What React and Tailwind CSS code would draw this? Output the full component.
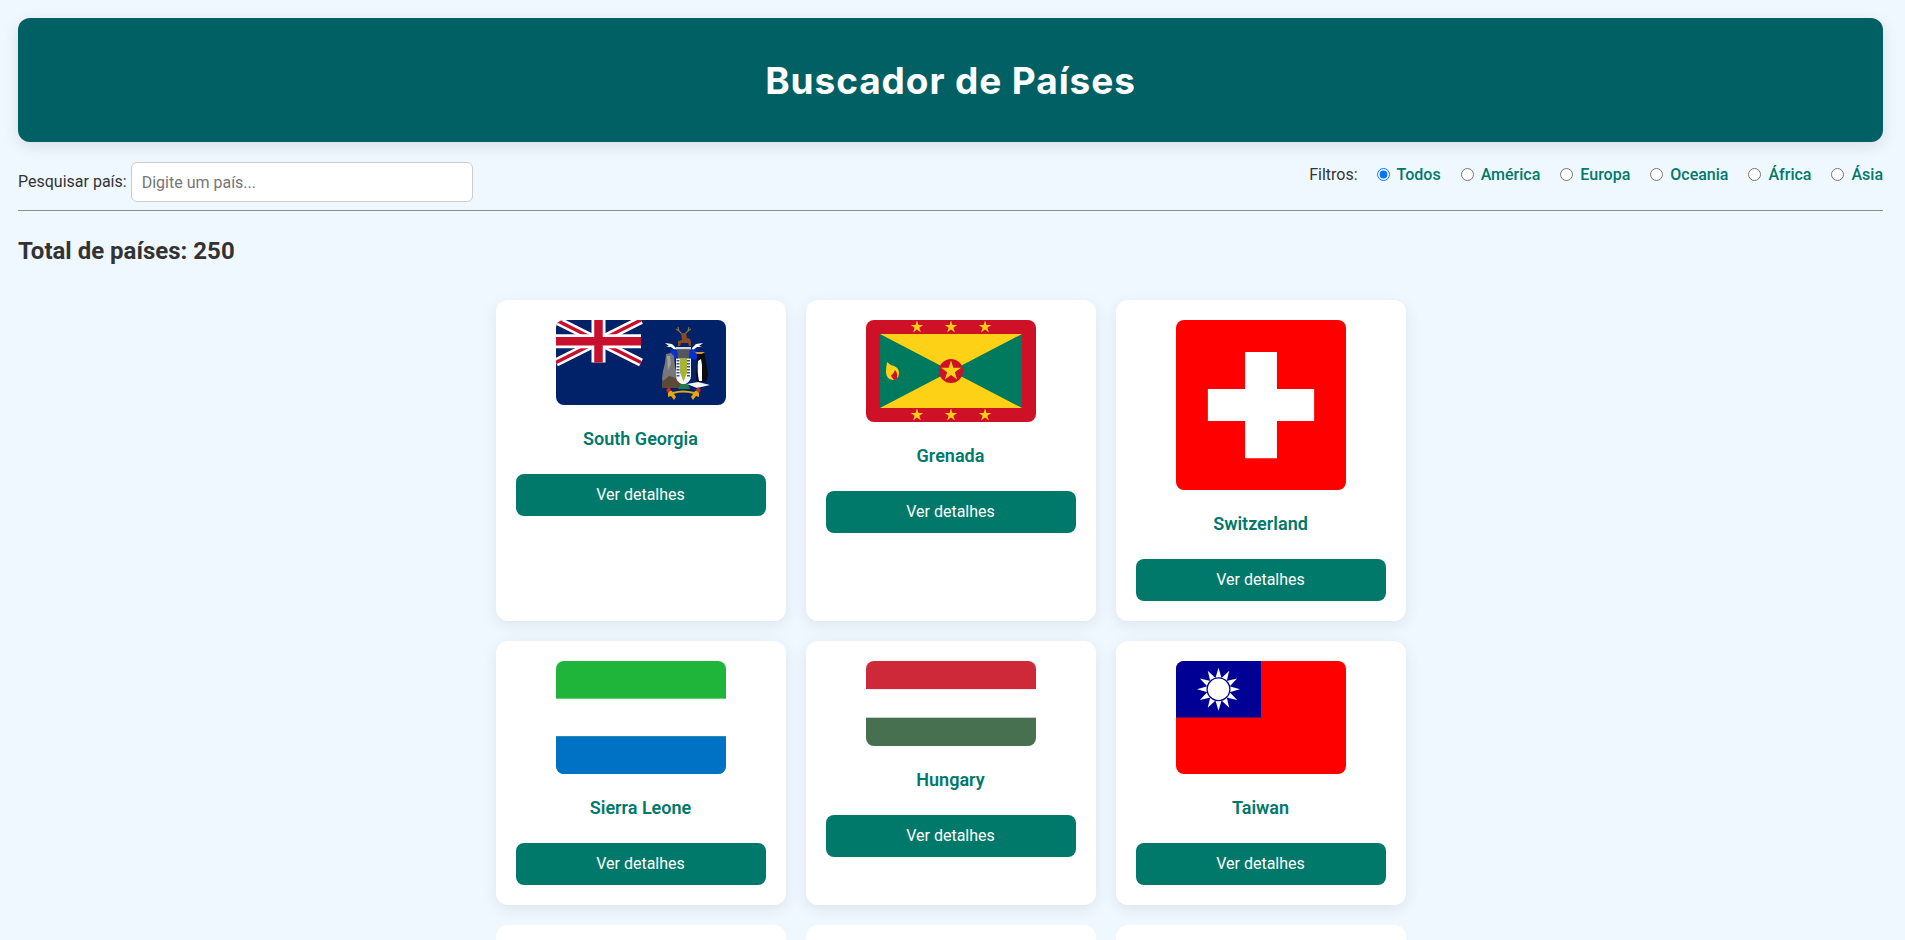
import React from "react";

function starPoints(cx, cy, r) {
  const pts = [];
  for (let i = 0; i < 10; i++) {
    const rad = i % 2 === 0 ? r : r * 0.382;
    const a = -Math.PI / 2 + (i * Math.PI) / 5;
    pts.push(`${cx + rad * Math.cos(a)},${cy + rad * Math.sin(a)}`);
  }
  return pts.join(" ");
}

function SouthGeorgiaFlag() {
  const checks = [];
  for (let y = 0; y < 6; y++) {
    checks.push(<rect key={`l${y}`} x="120.500" y={40 + y * 3} width="3" height="1.500" fill="#3450a8" />);
    checks.push(<rect key={`r${y}`} x="131" y={40 + y * 3} width="3" height="1.500" fill="#3450a8" />);
  }
  return (
    <svg viewBox="0 0 170 85" className="block w-[170px] h-[85px]">
      <rect width="170" height="85" fill="#012169" />
      <path d="M0 0L85 42.5M85 0L0 42.5" stroke="#fff" strokeWidth="8.5" />
      <path d="M0 0L85 42.5M85 0L0 42.5" stroke="#c8102e" strokeWidth="3.4" />
      <path d="M42.5 0V42.5M0 21.25H85" stroke="#fff" strokeWidth="14" />
      <path d="M42.5 0V42.5M0 21.25H85" stroke="#c8102e" strokeWidth="8.5" />
      {/* antlers + deer */}
      <path d="M122 7l1 4 3 3M133 7l-1 4-3 3M120 9l3 2M135 9l-3 2" stroke="#8f7440" strokeWidth="1.100" fill="none" />
      <path d="M125 13h5l1 5 3 1 1 3 0 4h-2l-1-3h-7l-1 3h-2l0-5 4-1z" fill="#8b4a24" />
      {/* wings */}
      <path d="M109 23l7 1 4 4 0 3-5-4-5 0 3-1z" fill="#fff" />
      <path d="M147 23l-7 1-4 4 0 3 5-4 5 0-3-1z" fill="#fff" />
      {/* blue mantling */}
      <path d="M115 30l5-1 2 8-6 3-3-3z" fill="#0a2fd0" />
      <path d="M140 30l-5-1-2 8 6 3 3-3z" fill="#0a2fd0" />
      <rect x="120" y="27" width="15" height="2.500" fill="#d8d8d8" />
      <path d="M121 29.500h13l-1 9h-11z" fill="#55565a" />
      {/* seal */}
      <path d="M110 34l5-1 3 3 1 10 2 10 1 8h-15l-1-6 1-7 2-8z" fill="#777" />
      <path d="M111 36l3 0 1 8-3 6z" fill="#a0a0a0" />
      <path d="M106 62l7-6 7 2 6 6v4h-20z" fill="#5c4a38" />
      {/* shield */}
      <path d="M120 38.500h15v17q0 7-7.500 9.500q-7.500-2.500-7.500-9.500z" fill="#f4f4f4" />
      {checks}
      <path d="M124 38.500h7v14l-3.500 9l-3.500-9z" fill="#a9b52f" />
      <path d="M124 64h8l2 5h-12z" fill="#1f7a4e" />
      {/* penguin */}
      <path d="M141 33l3-1 4 1 2 8 2 14-2 7h-9l-1-7 1-14z" fill="#0b0b10" />
      <path d="M142 41l3-2 1 6 0 16h-3q-2-9-1-20z" fill="#fff" />
      <path d="M139 32h10l-3 2h-5z" fill="#d6952c" />
      <path d="M131 64l11-2 12 3-13 3z" fill="#f4f4f4" />
      {/* motto */}
      <path d="M117 73q10-3 21 0" stroke="#e5a712" strokeWidth="2" fill="none" />
      <path d="M112 70l4 1 4 6-2 3-3-4-3 1zM143 70l-4 1-4 6 2 3 3-4 3 1z" fill="#e5a712" />
      <path d="M110 70l3-3 2 3-3 3zM145 70l-3-3-2 3 3 3z" fill="#c8321c" />
    </svg>
  );
}

function GrenadaFlag() {
  return (
    <svg viewBox="0 0 170 102" className="block w-[170px] h-[102px]">
      <rect width="170" height="102" fill="#ce1126" />
      <rect x="14" y="14" width="142" height="74" fill="#007a5e" />
      <path d="M14 14H156L14 88H156z" fill="#fcd116" />
      <circle cx="85" cy="51" r="12" fill="#ce1126" />
      <polygon points={starPoints(85, 51, 10.5)} fill="#fcd116" />
      {[51, 85, 119].map((x) => (
        <React.Fragment key={x}>
          <polygon points={starPoints(x, 7, 6.5)} fill="#fcd116" />
          <polygon points={starPoints(x, 95, 6.5)} fill="#fcd116" />
        </React.Fragment>
      ))}
      <path d="M21 42q-1 6-1 10q0 7 7 8q6-1 6-7q0-5-5-7q-4-1-7-4z" fill="#fcd116" />
      <path d="M29 50q3 3 2 9l-3 1q-3-3-3-5q2 0 4-5z" fill="#ce1126" />
    </svg>
  );
}

function SwitzerlandFlag() {
  return (
    <svg viewBox="0 0 32 32" className="block w-[170px] h-[170px]">
      <rect width="32" height="32" fill="#ff0000" />
      <path d="M13 6h6v7h7v6h-7v7h-6v-7H6v-6h7z" fill="#fff" />
    </svg>
  );
}

function SierraLeoneFlag() {
  return (
    <svg viewBox="0 0 3 2" className="block w-[170px] h-[113px]" preserveAspectRatio="none">
      <rect width="3" height="2" fill="#1eb53a" />
      <rect y="0.6667" width="3" height="0.6667" fill="#fff" />
      <rect y="1.3333" width="3" height="0.6667" fill="#0072c6" />
    </svg>
  );
}

function HungaryFlag() {
  return (
    <svg viewBox="0 0 6 3" className="block w-[170px] h-[85px]">
      <rect width="6" height="1" fill="#ce2939" />
      <rect y="1" width="6" height="1" fill="#fff" />
      <rect y="2" width="6" height="1" fill="#477050" />
    </svg>
  );
}

function TaiwanFlag() {
  const rays = Array.from({ length: 12 }, (_, i) => i * 30);
  return (
    <svg viewBox="0 0 170 113" className="block w-[170px] h-[113px]">
      <rect width="170" height="113" fill="#fe0000" />
      <rect width="85" height="56.5" fill="#000095" />
      <g transform="translate(42.5 28.25)">
        {rays.map((a) => (
          <polygon key={a} points="-3.100,-11 0,-21.500 3.100,-11" fill="#fff" transform={`rotate(${a})`} />
        ))}
        <circle r="12" fill="#000095" />
        <circle r="10.700" fill="#fff" />
      </g>
    </svg>
  );
}

function CountryCard({ name, Flag }) {
  return (
    <div className="flex flex-col items-center bg-white rounded-xl p-5 shadow-[0_4px_16px_rgba(0,0,0,0.08)]">
      <div className="rounded-lg overflow-hidden">
        <Flag />
      </div>
      <h3 className="mt-[23px] mb-[25px] text-[18px] leading-[21px] font-semibold text-[#00796b] text-center">{name}</h3>
      <button className="w-full h-[42px] rounded-lg bg-[#00796b] text-white text-[16px] cursor-pointer">Ver detalhes</button>
    </div>
  );
}

const regions = ["Todos", "América", "Europa", "Oceania", "África", "Ásia"];

const countries = [
  ["South Georgia", SouthGeorgiaFlag],
  ["Grenada", GrenadaFlag],
  ["Switzerland", SwitzerlandFlag],
  ["Sierra Leone", SierraLeoneFlag],
  ["Hungary", HungaryFlag],
  ["Taiwan", TaiwanFlag],
];

export default function App() {
  return (
    <div className="h-[940px] overflow-hidden bg-[#f0f8ff] pt-[18px] pl-[18px] pr-[22px] font-['Roboto',sans-serif] text-[#333]">
      <header className="flex h-[124px] items-center justify-center rounded-xl bg-[#006064] pt-[2px] shadow-[0_4px_16px_rgba(0,0,0,0.1)]">
        <h1 className="font-['Inter',sans-serif] text-[37px] font-bold tracking-[0.9px] text-white">Buscador de Países</h1>
      </header>

      <div className="mt-5 flex items-start justify-between border-b border-[#8c8c8c] pb-2">
        <div className="flex items-center gap-[4px]">
          <label className="text-[16px]">Pesquisar país:</label>
          <input
            type="text"
            placeholder="Digite um país..."
            className="h-10 w-[342px] rounded-md border border-[#ccc] bg-white px-[10px] text-[16px] outline-none placeholder:text-[#757575]"
          />
        </div>
        <div className="flex items-center gap-[19px] pt-[1px]">
          <span className="text-[16px]">Filtros:</span>
          <div className="flex items-center gap-5">
            {regions.map((r, i) => (
              <label key={r} className="flex items-center gap-[7px] text-[16px] font-medium text-[#00796b]">
                <input type="radio" name="region" defaultChecked={i === 0} className="m-0 mb-[2px] h-[13px] w-[13px]" />
                {r}
              </label>
            ))}
          </div>
        </div>
      </div>

      <h2 className="mt-[25px] text-[24px] leading-[30px] font-bold">Total de países: 250</h2>

      <div className="mt-[34px] grid grid-cols-[repeat(3,290px)] justify-center gap-5">
        {countries.map(([name, Flag]) => (
          <CountryCard key={name} name={name} Flag={Flag} />
        ))}
        <div className="h-[200px] rounded-xl bg-white" />
        <div className="h-[200px] rounded-xl bg-white" />
        <div className="h-[200px] rounded-xl bg-white" />
      </div>
    </div>
  );
}
